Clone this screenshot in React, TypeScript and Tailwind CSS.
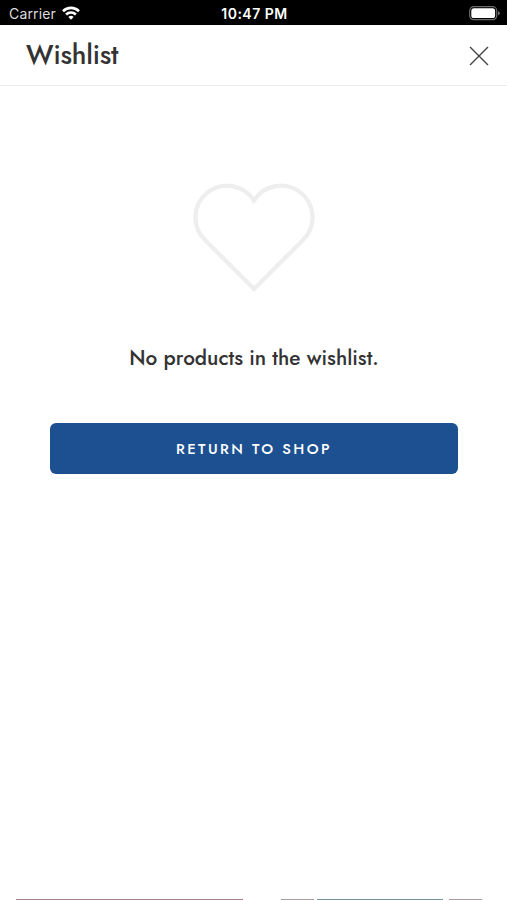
import React, { FC } from 'react'

// clipped tops of the product cards under the panel
const cardEdges = [
  { id: 1, width: 227, gap: 16, color: '#ad7f8b' },
  { id: 2, width: 33, gap: 38, color: '#a89f9f' },
  { id: 3, width: 126, gap: 3, color: '#7896a2' },
  { id: 4, width: 33, gap: 6, color: '#a89a9f' },
]

const StatusBar: FC = () => (
  <div className="grid h-[25px] grid-cols-3 items-center bg-black pt-[2px] pr-[7px] pl-[9px] text-white font-['Inter','Liberation_Sans',sans-serif]">
    <div className="flex items-center">
      <span className="text-[14px] leading-none tracking-[0.15px] text-[#dcdcdc]">Carrier</span>
      <svg className="mb-[2px] ml-[6px]" width="18" height="14" viewBox="0 0 18 14" fill="none" stroke="#fff" strokeWidth="2.6">
        <path d="M1 5.2a11.4 11.4 0 0 1 16 0" />
        <path d="M4.1 8.5a7 7 0 0 1 9.8 0" />
        <path d="M9 13.8 6.4 11a3.8 3.8 0 0 1 5.2 0Z" fill="#fff" stroke="none" />
      </svg>
    </div>
    <span className="text-center text-[14px] leading-none font-semibold tracking-[0.5px] whitespace-nowrap">10:47 PM</span>
    <svg className="justify-self-end" width="31" height="15" viewBox="0 0 31 15">
      <rect x="0.7" y="0.7" width="27" height="13" rx="4" fill="none" stroke="#6b6b6b" strokeWidth="1.2" />
      <rect x="2.3" y="2.3" width="23.8" height="9.8" rx="2.6" fill="#fff" />
      <path d="M29 5v4.5q1.8-.8 1.8-2.25T29 5Z" fill="#777" />
    </svg>
  </div>
)

const Header: FC = () => (
  <header className="flex h-[61px] items-center justify-between border-b border-[#e9e9e9] pr-[18px] pl-[26px]">
    <h1 className="pb-[2px] text-[27px] leading-none font-medium tracking-[-0.15px]">Wishlist</h1>
    <button aria-label="Close" className="pt-[2px]">
      <svg width="20" height="20" viewBox="0 0 20 20" stroke="#444" strokeWidth="1.4">
        <path d="m1 1 18 18M19 1 1 19" />
      </svg>
    </button>
  </header>
)

const App: FC = () => {
  return (
    <div className="flex h-[900px] w-full flex-col overflow-hidden bg-white text-[#333] font-['Jost','Lato',sans-serif]">
      <StatusBar />
      <Header />

      <main className="flex grow flex-col items-center pt-[97px] pr-[49px] pl-[50px]">
        <svg width="122" height="110" viewBox="0 0 122 110" fill="none" stroke="#eeeeee" strokeWidth="4.3">
          <path d="M61 17.5A31.7 31.7 0 1 0 12.5 57.5L61 106l48.5-48.5A31.7 31.7 0 1 0 61 17.5Z" />
        </svg>
        <p className="mt-[53px] text-[20.8px] leading-[24px] font-medium whitespace-nowrap">
          No products in the wishlist.
        </p>
        <button className="mt-[53px] h-[51px] w-full rounded-[6px] bg-[#1d5090] pt-[2px] text-[14.8px] font-medium tracking-[2.4px] text-white">
          RETURN TO SHOP
        </button>
      </main>

      <div className="flex h-px">
        {cardEdges.map((edge) => (
          <div
            key={edge.id}
            className="h-px shrink-0"
            style={{ width: edge.width, marginLeft: edge.gap, backgroundColor: edge.color }}
          />
        ))}
      </div>
    </div>
  )
}

export default App
